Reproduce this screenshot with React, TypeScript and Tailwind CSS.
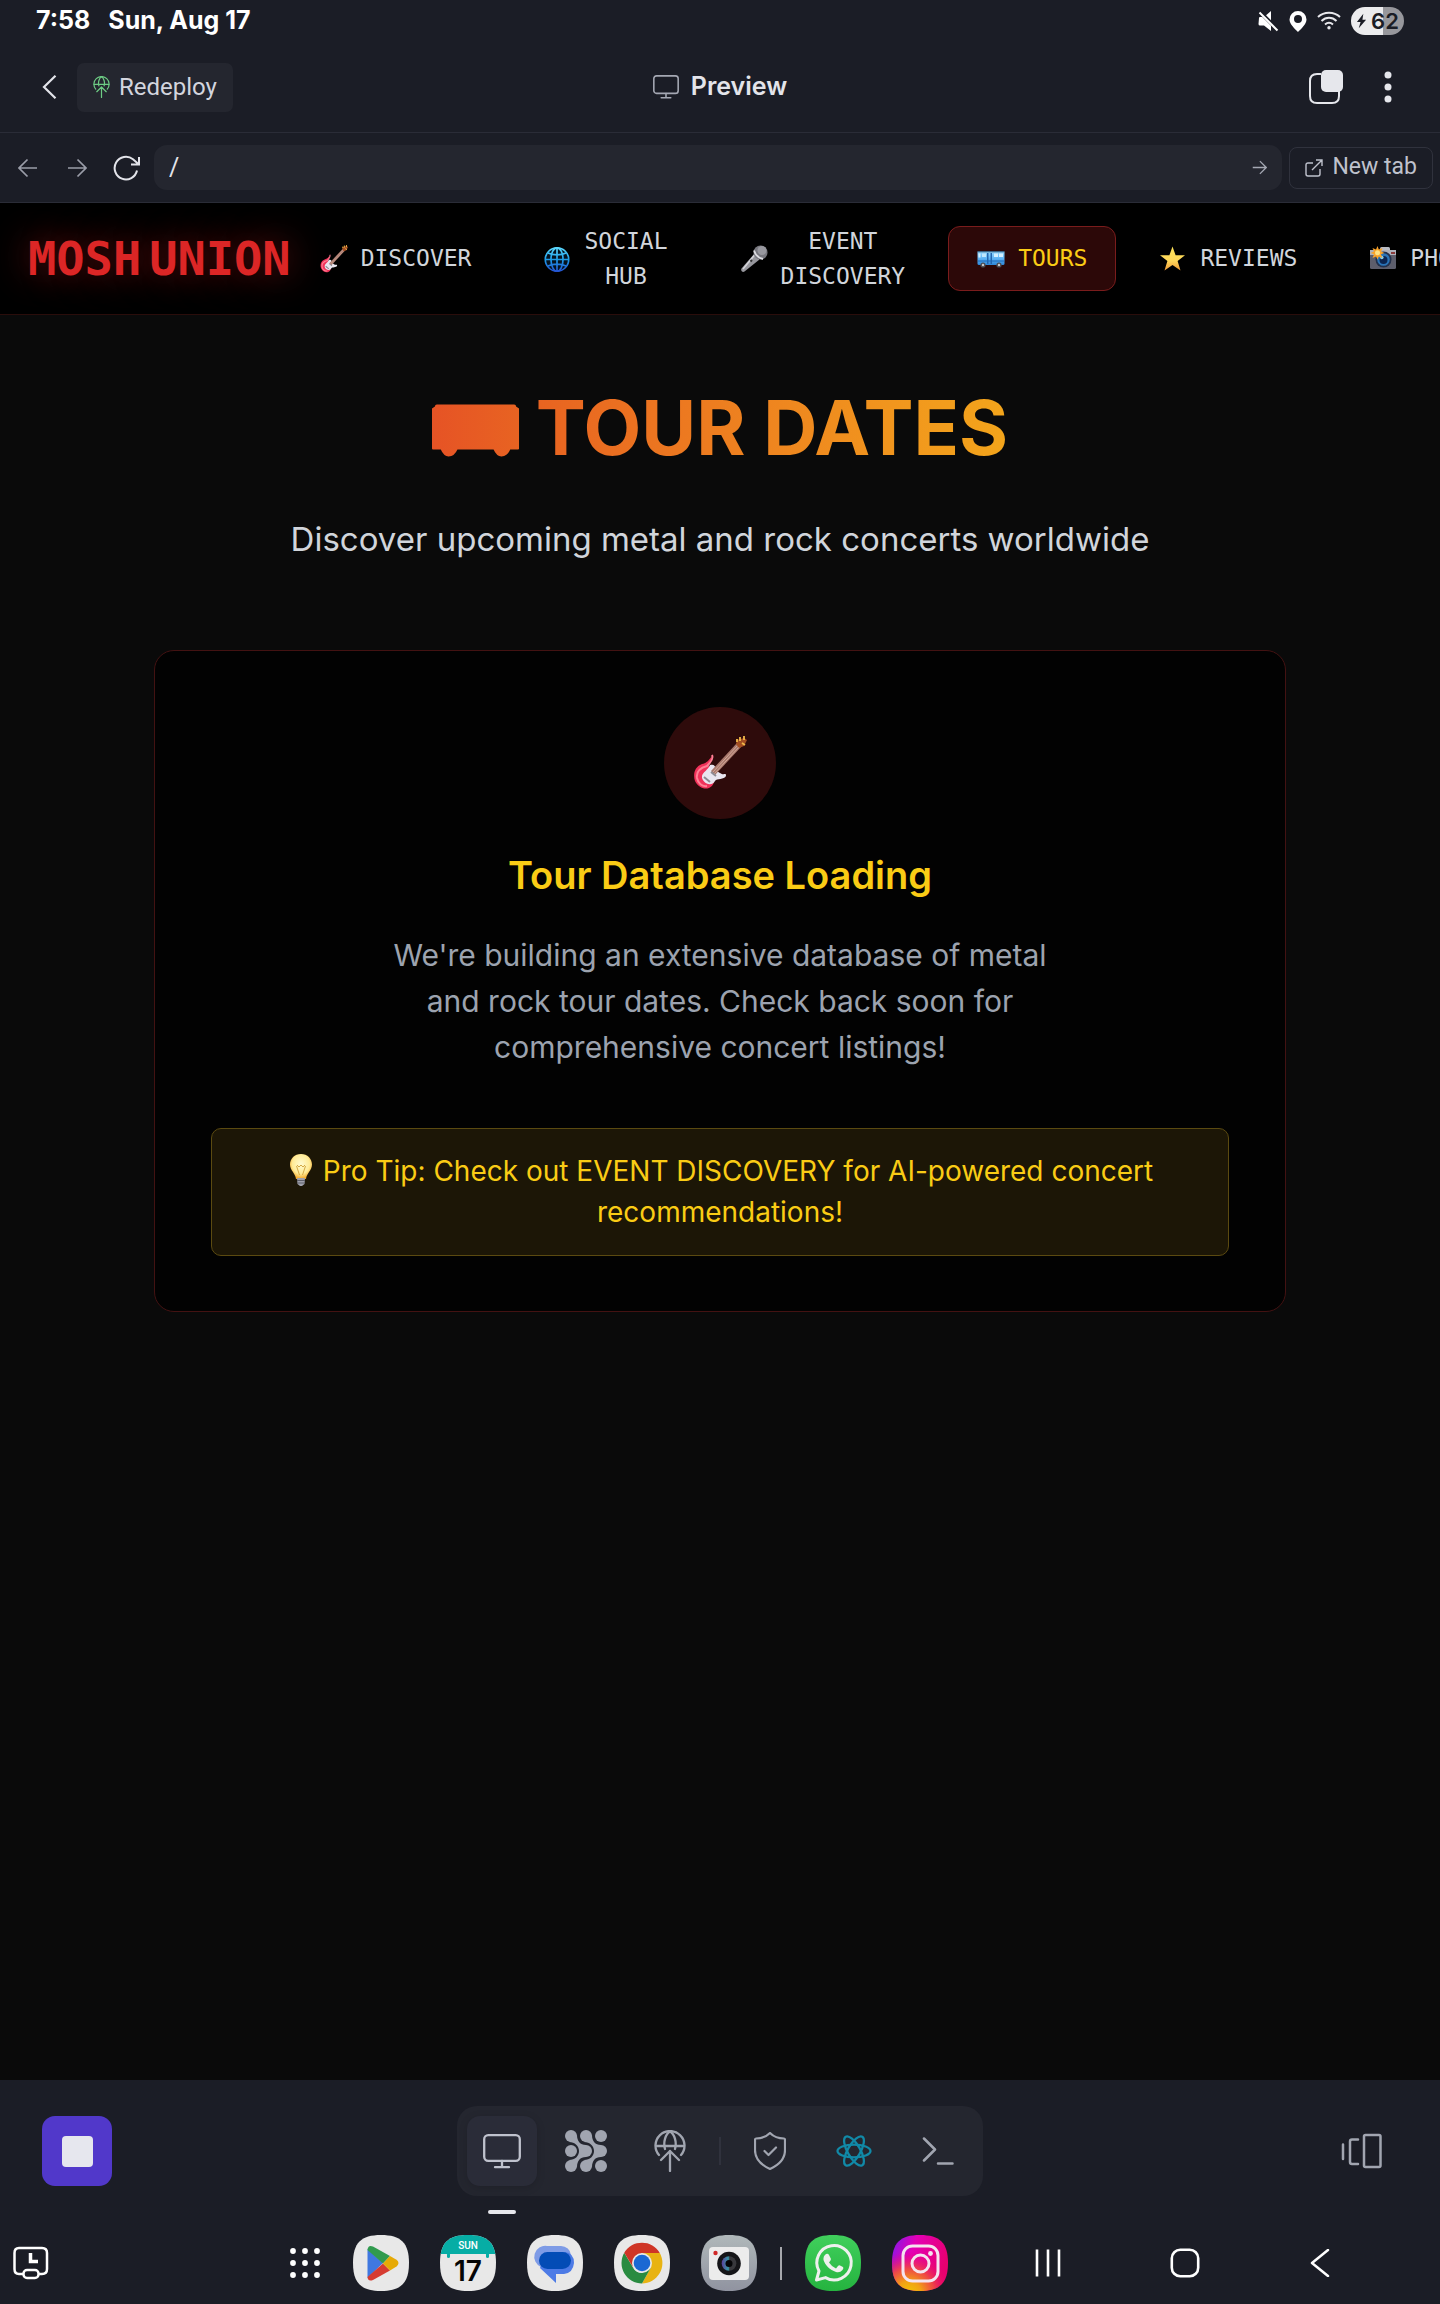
import React from "react";

type IconProps = { className?: string };

function GuitarEmoji({ className }: IconProps) {
  return (
    <svg viewBox="0 0 54 54" className={className} aria-hidden="true">
      <path d="M19 20C16 24 14 27 9 28C1 31 0 39 2 45C5 51 11 54 16 52C21 50 21 45 22 42L16 30Z" fill="#f0325a" />
      <path d="M19 19C21 23 17 27 14 30C7 32 3 36 4 42C5 47 9 51 14 50" fill="none" stroke="#ff8095" strokeWidth="2" />
      <path d="M17 29C24 27 21 34 27 37C31 40 33 36 33 40C31 44 24 42 22 45C18 52 8 46 9 40C10 36 15 34 17 29Z" fill="#e9e6f0" />
      <path d="M18 35L44 7L48 11L22 39Z" fill="#a9786c" />
      <path d="M20 36L45 9M21 38L46 11" stroke="#d8b5a6" strokeWidth=".8" />
      <path d="M43 8L44 4L51 2L54 4L51 10L46 12Z" fill="#a34e22" />
      <path d="M44 3V6M47 1V5M51 0V4M52 9L49 7" stroke="#f1b94a" strokeWidth="1.8" />
      <path d="M11 41L17 46M18 36L23 40" stroke="#8d8a92" strokeWidth="2" />
    </svg>
  );
}

function GlobeEmoji({ className }: IconProps) {
  return (
    <svg viewBox="0 0 28 28" className={className} aria-hidden="true">
      <defs>
        <linearGradient id="globe" gradientUnits="userSpaceOnUse" x1="0" y1="2" x2="0" y2="27">
          <stop offset="0" stopColor="#5fdcff" />
          <stop offset=".5" stopColor="#1c9ce8" />
          <stop offset="1" stopColor="#2450d0" />
        </linearGradient>
      </defs>
      <circle cx="14" cy="14.500" r="11.500" fill="#04121f" />
      <g fill="none" stroke="url(#globe)" strokeWidth="1.700">
        <circle cx="14" cy="14.500" r="11.700" />
        <ellipse cx="14" cy="14.500" rx="6" ry="11.700" />
        <path d="M14.010 3L14 26M2.500 14.510L25.500 14.500M5 8C10 10.500 18 10.500 23 8M5 21C10 18.500 18 18.500 23 21" />
      </g>
    </svg>
  );
}

function MicEmoji({ className }: IconProps) {
  return (
    <svg viewBox="0 0 28 28" className={className} aria-hidden="true">
      <path d="M14.500 8.500L19.500 14.500L4.500 26.500C2.500 28 .3 25.500 1.500 23.500Z" fill="#97979d" />
      <path d="M15 9.500L3 24" stroke="#d5d5da" strokeWidth="1.500" />
      <path d="M10.500 16.500L12 15" stroke="#333" strokeWidth="2" />
      <circle cx="20.500" cy="7.500" r="7" fill="#77777e" />
      <circle cx="22" cy="5.500" r="4.500" fill="#98989f" />
      <path d="M14 5.500C15.500 10 18.500 13 23 14" fill="none" stroke="#dddde2" strokeWidth="1.800" />
    </svg>
  );
}

function BusEmoji({ className }: IconProps) {
  return (
    <svg viewBox="0 0 28 28" className={className} aria-hidden="true">
      <defs>
        <linearGradient id="bus" x1="0" y1="0" x2="0" y2="1">
          <stop offset="0" stopColor="#9adcff" />
          <stop offset=".5" stopColor="#62b6f5" />
          <stop offset="1" stopColor="#2d86d8" />
        </linearGradient>
      </defs>
      <rect x=".5" y="6" width="27" height="14" rx="1.500" fill="url(#bus)" />
      <rect x=".5" y="6" width="27" height="1.300" fill="#3a6689" />
      <rect x="1.500" y="8.500" width="2" height="4" fill="#d5f0ff" />
      <rect x="5" y="8.500" width="4" height="3.500" fill="#bfe6fc" />
      <path d="M10 8h1.500v11H10zM13.500 8H15v11h-1.500z" fill="#2466ad" />
      <rect x="17" y="8.500" width="4" height="3.500" fill="#d5f0ff" />
      <rect x="22" y="8.500" width="4" height="3.500" fill="#d5f0ff" />
      <path d="M1 16H27" stroke="#1c69ba" />
      <circle cx="6" cy="20" r="2.600" fill="#4b4c52" />
      <circle cx="6" cy="20" r="1.200" fill="#c6c7cb" />
      <circle cx="22" cy="20" r="2.600" fill="#4b4c52" />
      <circle cx="22" cy="20" r="1.200" fill="#c6c7cb" />
    </svg>
  );
}

function StarEmoji({ className }: IconProps) {
  return (
    <svg viewBox="0 0 28 28" className={className} aria-hidden="true">
      <defs>
        <linearGradient id="star" x1="0" y1="0" x2="0" y2="1">
          <stop offset="0" stopColor="#ffe458" />
          <stop offset=".6" stopColor="#ffd75a" />
          <stop offset="1" stopColor="#ef9a35" />
        </linearGradient>
      </defs>
      <path d="M13.500 1.500L16.600 10.200H26L18.600 16L21.500 25.500L13.500 20L5.500 25.500L8.400 16L1 10.200H10.400Z" fill="url(#star)" />
    </svg>
  );
}

function CameraEmoji({ className }: IconProps) {
  return (
    <svg viewBox="0 0 28 28" className={className} aria-hidden="true">
      <rect x="11" y="2" width="10" height="6" rx="1.500" fill="#b9bcc4" />
      <rect x="1" y="5" width="26" height="19" rx="1.500" fill="#5d5e6c" />
      <rect x="1" y="5" width="26" height="5" fill="#aeb1bb" />
      <circle cx="14.500" cy="14.500" r="8" fill="#23304b" />
      <circle cx="14.500" cy="14.500" r="6.300" fill="#2a74b8" />
      <circle cx="14.500" cy="15" r="4" fill="#0c2550" />
      <circle cx="12.800" cy="12.500" r="1.800" fill="#82d0f1" />
      <rect x="22" y="7" width="4" height="2" fill="#8a3b3b" />
      <path d="M8.500 1L9.800 4.500L13.500 3L12 6.500L15.500 8L12 9.300L13.300 13L9.800 11.400L8.500 14.500L7 11.400L3.500 13L5 9.300L1.500 8L5 6.500L3.500 3L7 4.500Z" fill="#f9a32a" />
      <circle cx="8.500" cy="7.800" r="2.500" fill="#ffe183" />
    </svg>
  );
}

function BulbEmoji({ className }: IconProps) {
  return (
    <svg viewBox="0 0 28 34" className={className} aria-hidden="true">
      <defs>
        <radialGradient id="bulb" cx=".5" cy=".4" r=".6">
          <stop offset="0" stopColor="#fffbd0" />
          <stop offset=".65" stopColor="#ffeb96" />
          <stop offset="1" stopColor="#f2a524" />
        </radialGradient>
      </defs>
      <path d="M14 1C7.500 1 3 5.700 3 11.600C3 17.500 8.500 20.500 9 26H19C19.500 20.500 25 17.500 25 11.600C25 5.700 20.500 1 14 1Z" fill="url(#bulb)" />
      <path d="M12.500 22L9.500 13M15.500 22L18.500 13M10 12L12 14L14 12L16 14L18 12" fill="none" stroke="#d3a945" />
      <path d="M10 25H18L17.500 31L15 33H13L10.500 31Z" fill="#9fa0ab" />
      <path d="M10 27.500H18M10.500 30H17.500" stroke="#5d5e69" />
    </svg>
  );
}

function BusShape({ className }: IconProps) {
  return (
    <svg viewBox="0 0 90 54" className={className} aria-hidden="true">
      <defs>
        <linearGradient id="busShape" x1="0" y1="0" x2="1" y2="0">
          <stop offset="0" stopColor="#e65325" />
          <stop offset="1" stopColor="#e86322" />
        </linearGradient>
      </defs>
      <path d="M5 0H84Q86 0 86 2L89 4V45Q89 46 88 46H80Q77 53 71 53Q66 53 63 46H26Q23 53 17 53Q12 53 9 46H1Q0 46 0 45V4L3 2Q3 0 5 0Z" fill="url(#busShape)" />
    </svg>
  );
}

function GlobeUpload({ className }: IconProps) {
  return (
    <svg viewBox="0 0 32 42" fill="none" stroke="currentColor" strokeWidth="2.300" strokeLinecap="round" strokeLinejoin="round" className={className} aria-hidden="true">
      <path d="M5 25A14.500 14.500 0 1 1 27 25" />
      <path d="M11 19C9 12 11.500 4 16 1.500C20.500 4 23 12 21 19M2 16H30M16 41V21M7 30L16 21L25 30" />
    </svg>
  );
}

function Monitor({ className }: IconProps) {
  return (
    <svg viewBox="0 0 38 35" fill="none" stroke="currentColor" strokeWidth="2.300" strokeLinecap="round" className={className} aria-hidden="true">
      <rect x="1.200" y="1.200" width="35.600" height="25.600" rx="4" />
      <path d="M19 27V32.500M12 33.200H26" />
    </svg>
  );
}

function Mute() {
  return (
    <svg viewBox="0 0 22 22" className="h-[22px] w-[22px]" aria-hidden="true">
      <path d="M2 8Q2 7 3 7H7L14 1V21L7 15.500H3Q1.500 15.500 1.500 14Z" fill="#fff" />
      <path d="M1 0L22 21" stroke="#1b1d26" strokeWidth="4" />
      <path d="M2.500 2.500L20.500 20.500" stroke="#fff" strokeWidth="2" />
    </svg>
  );
}

function Wifi() {
  return (
    <svg viewBox="0 0 24 20" fill="none" stroke="#e8e8ec" strokeWidth="2" className="h-[20px] w-[24px]" aria-hidden="true">
      <path d="M1 6C7 .3 17 .3 23 6M4.500 10C9 5.800 15 5.800 19.500 10M8 13.500C10.500 11.300 13.500 11.300 16 13.500" />
      <circle cx="12" cy="16.800" r="1.700" fill="#e8e8ec" stroke="none" />
    </svg>
  );
}

function StatusBar() {
  return (
    <div className="flex h-[42px] items-center px-9 font-['Inter'] text-[25px] font-bold text-white">
      <span>7:58</span>
      <span className="ml-[18px]">Sun, Aug 17</span>
      <div className="ml-auto flex items-center gap-[10px]">
        <Mute />
        <svg viewBox="0 0 18 22" className="h-[22px] w-[18px]" aria-hidden="true">
          <path fillRule="evenodd" d="M9 1A8.500 8.500 0 0 0 .5 9.500C.5 14 6 19 9 22C12 19 17.500 14 17.500 9.500A8.500 8.500 0 0 0 9 1ZM9 5A4 4 0 1 1 9 13A4 4 0 1 1 9 5Z" fill="#fff" />
        </svg>
        <Wifi />
        <span className="flex h-7 w-[53px] items-center justify-center gap-1 rounded-full bg-linear-to-r from-[#ececee] from-60% to-[#97979c] to-60% text-[22px] font-semibold text-[#1b1d26]">
          <svg viewBox="0 0 12 16" className="h-4 w-[11px]" aria-hidden="true">
            <path d="M8 0L1 9H5L3 16L11 6.500H7Z" fill="#1b1d26" />
          </svg>
          62
        </span>
      </div>
    </div>
  );
}

function Header() {
  return (
    <header className="grid h-[90px] grid-cols-[1fr_auto_1fr] items-center font-['Roboto']">
      <div className="flex items-center pl-[42px]">
        <button aria-label="Back" className="w-[35px]">
          <svg viewBox="0 0 15 24" fill="none" stroke="#e3e4ea" strokeWidth="2.200" className="h-6 w-[15px]">
            <path d="M13.500 .8L2 12L13.500 23.200" />
          </svg>
        </button>
        <button className="flex h-[49px] items-center gap-[9px] rounded-[7px] bg-[#24262f] px-4 text-[24px] text-[#d3d5de]">
          <GlobeUpload className="h-[22px] w-[17px] text-[#6dcb84]" />
          Redeploy
        </button>
      </div>
      <div className="flex items-center gap-3">
        <Monitor className="h-6 w-[26px] text-[#a5a8b3]" />
        <h2 className="font-['Inter'] text-[25px] font-semibold text-[#e3e4ea]">Preview</h2>
      </div>
      <div className="flex items-center justify-end gap-[40px] pr-12">
        <button aria-label="Tabs">
          <svg viewBox="0 0 36 36" className="block h-9 w-9">
            <path d="M13 5H9Q2 5 2 12V27Q2 34 9 34H24Q31 34 31 27V22" fill="none" stroke="#e6e7ec" strokeWidth="2" />
            <rect x="13" y="1" width="22" height="22" rx="5" fill="#e6e7ec" />
          </svg>
        </button>
        <button aria-label="More">
          <svg viewBox="0 0 8 32" fill="#e6e7ec" className="block h-8 w-2">
            <circle cx="4" cy="4" r="3.500" />
            <circle cx="4" cy="16" r="3.500" />
            <circle cx="4" cy="28" r="3.500" />
          </svg>
        </button>
      </div>
    </header>
  );
}

function Arrow({ className }: IconProps) {
  return (
    <svg viewBox="0 0 20 20" fill="none" stroke="currentColor" strokeWidth="1.700" className={className} aria-hidden="true">
      <path d="M1 10H18.500M10.500 1.500L19 10L10.500 18.500" />
    </svg>
  );
}

function AddressBar() {
  return (
    <div className="flex h-[71px] items-center border-y border-[#2a2c37] pr-[7px] pl-[18px] font-['Roboto']">
      <button aria-label="Go back" className="w-[49px]">
        <Arrow className="h-5 w-5 rotate-180 text-[#9a9da8]" />
      </button>
      <button aria-label="Go forward" className="w-[46px]">
        <Arrow className="h-5 w-5 text-[#9a9da8]" />
      </button>
      <button aria-label="Reload" className="w-[41px]">
        <svg viewBox="0 0 28 26" fill="none" stroke="#e3e4ea" strokeWidth="2" className="h-[26px] w-7">
          <path d="M24 15.500A11.300 11.300 0 1 1 20 4.300L26 9.500M26 2V9.500H18" />
        </svg>
      </button>
      <div className="flex h-[45px] flex-1 items-center rounded-[13px] bg-[#24262f] px-[15px]">
        <input aria-label="Path" defaultValue="/" className="w-full min-w-0 flex-1 bg-transparent text-[25px] text-[#e3e4ea] outline-none" />
        <button aria-label="Open path">
          <Arrow className="block h-[15px] w-[15px] text-[#a5a8b3]" />
        </button>
      </div>
      <button className="ml-[7px] flex h-[42px] items-center gap-[9px] rounded-lg border border-[#30323d] px-[15px] text-[23px] whitespace-nowrap text-[#bfc2cd]">
        <svg viewBox="0 0 18 18" fill="none" stroke="currentColor" strokeWidth="1.400" className="h-[18px] w-[18px]" aria-hidden="true">
          <path d="M8 4H3Q1 4 1 6V15Q1 17 3 17H13Q15 17 15 15V10M7 11L17 1M11 1H17V7" />
        </svg>
        New tab
      </button>
    </div>
  );
}

const navItems = [
  { lines: ["DISCOVER"], Icon: GuitarEmoji },
  { lines: ["SOCIAL", "HUB"], Icon: GlobeEmoji },
  { lines: ["EVENT", "DISCOVERY"], Icon: MicEmoji },
  { lines: ["TOURS"], Icon: BusEmoji, active: true },
  { lines: ["REVIEWS"], Icon: StarEmoji },
  { lines: ["PHOTOS"], Icon: CameraEmoji },
];

function SiteNav() {
  return (
    <nav className="flex h-[112px] items-center overflow-hidden border-b border-[#2a0d0b] bg-black pl-7 font-['DejaVu_Sans_Mono']">
      <a href="#home" className="flex shrink-0 gap-2 text-[47px] leading-none font-bold whitespace-nowrap text-[#dc2626] [text-shadow:0_0_35px_rgba(220,38,38,0.5)]">
        <span>MOSH</span> <span>UNION</span>
      </a>
      <div className="flex items-center gap-[14px]">
        {navItems.map(({ lines, Icon, active }) => (
          <a
            key={lines.join(" ")}
            href="#section"
            className={
              "flex shrink-0 items-center gap-[13px] rounded-xl border px-7 py-[14px] text-center text-[23px] leading-[35px] " +
              (active ? "border-[#7a1c1c] bg-[#2c0808] text-[#facc15]" : "border-transparent text-[#d1d5db]")
            }
          >
            <Icon className="h-7 w-7" />
            <span>
              {lines.map((line) => (
                <span key={line} className="block">{line}</span>
              ))}
            </span>
          </a>
        ))}
      </div>
    </nav>
  );
}

function TourPage() {
  return (
    <main className="flex-1 bg-[#0a0a0a] px-7 pt-[64px] text-center font-['Inter']">
      <h1 className="flex items-center justify-center gap-4 text-[75px] leading-[98px] font-bold">
        <BusShape className="mt-[6px] h-[54px] w-[88px]" />
        <span className="bg-linear-to-r from-[#e86321] to-[#f3a51b] bg-clip-text text-transparent">TOUR DATES</span>
      </h1>
      <p className="mt-[37px] text-[33px] leading-[50px] text-[#d1d5db]">Discover upcoming metal and rock concerts worldwide</p>
      <section className="mx-auto mt-[86px] max-w-[1132px] rounded-[20px] border border-[#431212] bg-[#020202] px-14 pt-14 pb-[55px]">
        <div className="mx-auto flex h-28 w-28 items-center justify-center rounded-full bg-[#2e0b0b]">
          <GuitarEmoji className="h-[54px] w-[54px]" />
        </div>
        <h2 className="mt-8 text-[38px] leading-[48px] font-semibold text-[#facc15]">Tour Database Loading</h2>
        <p className="mx-auto mt-[33px] max-w-[704px] text-[30px] leading-[46px] text-[#9ca3af]">
          We're building an extensive database of metal and rock tour dates. Check back soon for comprehensive concert listings!
        </p>
        <div className="mt-[58px] rounded-[10px] border border-[#5b4a10] bg-[#1c1606] px-14 py-[22px] text-[28px] leading-[41px] text-[#facc15]">
          <BulbEmoji className="mr-2 inline-block h-[34px] w-7 align-[-6px]" />
          Pro Tip: Check out EVENT DISCOVERY for AI-powered concert recommendations!
        </div>
      </section>
    </main>
  );
}

function AgentDots() {
  return (
    <svg viewBox="0 0 42 42" className="h-[42px] w-[42px]" aria-hidden="true">
      <g fill="#a1a5b0">
        {[6, 21, 36].map((cx) => [6, 21, 36].map((cy) => <circle key={cx + "-" + cy} cx={cx} cy={cy} r="6" />))}
        <path d="M12 5C12 11 15 15 21 15V27C15 27 12 31 12 37L4 30C10 30 14 26 14 21C14 16 10 12 4 12Z" />
        <path d="M27 5C27 11 30 15 36 15V27C30 27 27 31 27 37L19 30C25 30 29 26 29 21C29 16 25 12 19 12Z" />
      </g>
    </svg>
  );
}

function Toolbar() {
  return (
    <div className="grid h-[142px] grid-cols-[1fr_auto_1fr] items-center px-[42px]">
      <button aria-label="Stop" className="flex h-[70px] w-[70px] items-center justify-center rounded-[13px] bg-[#5138ca]">
        <span className="h-[31px] w-[31px] rounded-[4px] bg-[#e6e7ee]" />
      </button>
      <div className="flex items-center gap-[14px] rounded-[20px] bg-[#24262f] p-[10px] text-[#a1a5b0]">
        <button aria-label="Preview" className="relative flex h-[70px] w-[70px] items-center justify-center rounded-[13px] bg-[#2a2c38] text-[#bfc2cd] shadow-[0_2px_8px_rgba(0,0,0,0.15)]">
          <Monitor className="h-[35px] w-[38px]" />
          <span className="absolute -bottom-7 left-[21px] h-1 w-7 rounded-[2px] bg-[#e6e7ec]" />
        </button>
        <button aria-label="Agent" className="flex h-[70px] w-[70px] items-center justify-center">
          <AgentDots />
        </button>
        <button aria-label="Publish" className="flex h-[70px] w-[70px] items-center justify-center">
          <GlobeUpload className="h-[42px] w-8" />
        </button>
        <span className="h-7 w-[2px] bg-[#30323d]" />
        <button aria-label="Security" className="flex h-[70px] w-[70px] items-center justify-center">
          <svg viewBox="0 0 32 38" fill="none" stroke="currentColor" strokeWidth="2.200" strokeLinecap="round" strokeLinejoin="round" className="h-[38px] w-8">
            <path d="M16 1C12 5 6 6.500 2 6.500Q1 6.500 1 8V18C1 27 7 33 16 37C25 33 31 27 31 18V8Q31 6.500 30 6.500C26 6.500 20 5 16 1ZM10.500 19L14.500 23L22 15.500" />
          </svg>
        </button>
        <button aria-label="React" className="flex h-[70px] w-[70px] items-center justify-center">
          <svg viewBox="-18 -18 36 36" fill="none" stroke="#1189a7" strokeWidth="2.300" className="h-9 w-9">
            <ellipse rx="16.500" ry="6.300" />
            <ellipse rx="16.500" ry="6.300" transform="rotate(60)" />
            <ellipse rx="16.500" ry="6.300" transform="rotate(120)" />
          </svg>
        </button>
        <button aria-label="Shell" className="flex h-[70px] w-[70px] items-center justify-center">
          <svg viewBox="0 0 32 28" fill="none" stroke="currentColor" strokeWidth="2.500" strokeLinecap="round" strokeLinejoin="round" className="h-7 w-8">
            <path d="M2 1.500L13 12.500L2 23.500M16 26.500H30.500" />
          </svg>
        </button>
      </div>
      <button aria-label="Switch panes" className="mr-4 justify-self-end">
        <svg viewBox="0 0 42 36" fill="none" stroke="#a1a5b0" strokeWidth="2.500" strokeLinecap="round" className="block h-9 w-[42px]">
          <path d="M3 11.500V26M18 6.500H12Q10 6.500 10 8.500V29Q10 31 12 31H18" />
          <rect x="24" y="2" width="16.500" height="32" rx="1.500" />
        </svg>
      </button>
    </div>
  );
}

const squircle = "M28 0C48 0 56 8 56 28C56 48 48 56 28 56C8 56 0 48 0 28C0 8 8 0 28 0Z";

function PlayStore() {
  return (
    <svg viewBox="0 0 56 56" className="block h-14 w-14">
      <path d={squircle} fill="#e8e8e8" />
      <path d="M14.500 14L30 28L14.500 43Z" fill="#4078e0" />
      <path d="M14.500 15Q15 9.500 20 11.500L37 21L30 28.500Z" fill="#319b4e" />
      <path d="M14.500 42Q15 47 20 45L37 35.500L30 28.500Z" fill="#d63c32" />
      <path d="M37 21L43.500 24.800Q47.500 28 43.500 31.500L37 35.500L30 28.500Z" fill="#e6aa07" />
    </svg>
  );
}

function Calendar() {
  return (
    <svg viewBox="0 0 56 56" className="block h-14 w-14">
      <defs>
        <clipPath id="calClip"><path d={squircle} /></clipPath>
      </defs>
      <path d={squircle} fill="#e8e8e8" />
      <g clipPath="url(#calClip)" fill="#06ada5">
        <rect width="56" height="19" />
        <rect x="7" y="18" width="3" height="5" rx="1.500" />
        <rect x="46" y="18" width="3" height="5" rx="1.500" />
      </g>
      <text x="28" y="14" textAnchor="middle" fill="#fff" className="font-['Roboto'] text-[10px] font-medium">SUN</text>
      <text x="28" y="46" textAnchor="middle" fill="#050505" className="font-['Inter'] text-[28px] font-semibold">17</text>
    </svg>
  );
}

function Messages() {
  return (
    <svg viewBox="0 0 56 56" className="block h-14 w-14">
      <path d={squircle} fill="#e8e8e8" />
      <path d="M20 11H34A10 10 0 0 1 44 20L14 32A11 11 0 0 1 20 11Z" fill="#7e9be6" />
      <path d="M20 17H38Q47 18 47 28Q46 38 37 39H29V48L13 33Z" fill="#4d7be6" />
      <rect x="12" y="17" width="32" height="17" rx="8.500" fill="#034cb6" />
    </svg>
  );
}

function Chrome() {
  return (
    <svg viewBox="0 0 56 56" className="block h-14 w-14">
      <path d={squircle} fill="#e8e8e8" />
      <path d="M28 18H45.800A20.500 20.500 0 0 1 28 48.500L36.700 33Z" fill="#e8b312" />
      <path d="M10.250 17.750L19.300 33Q22 38 28 38L36.700 33L28 48.500A20.500 20.500 0 0 1 10.250 17.750Z" fill="#298b40" />
      <path d="M10.250 17.750L19.500 33L28 18H45.750A20.500 20.500 0 0 0 10.250 17.750Z" fill="#cf3526" />
      <circle cx="28" cy="28" r="10" fill="#e8e8e8" />
      <circle cx="28" cy="28" r="8.300" fill="#1a68d3" />
    </svg>
  );
}

function CameraApp() {
  return (
    <svg viewBox="0 0 56 56" className="block h-14 w-14">
      <defs>
        <linearGradient id="camBg" x1="0" y1="0" x2="0" y2="1">
          <stop offset="0" stopColor="#b0b8ba" />
          <stop offset="1" stopColor="#9093a0" />
        </linearGradient>
        <linearGradient id="lens" x1="0" y1="0" x2="1" y2="0">
          <stop offset="0" stopColor="#5b3f9d" />
          <stop offset=".45" stopColor="#3698a6" />
          <stop offset=".55" stopColor="#38383c" />
        </linearGradient>
      </defs>
      <path d={squircle} fill="url(#camBg)" />
      <rect x="8" y="12" width="40" height="33" rx="4" fill="#ececec" />
      <circle cx="28" cy="28.500" r="11.800" fill="#151518" />
      <circle cx="28" cy="28.500" r="7.300" fill="url(#lens)" />
      <circle cx="28" cy="28.500" r="3.500" fill="#050507" />
      <circle cx="14.500" cy="18" r="2.200" fill="#d02828" />
    </svg>
  );
}

function WhatsApp() {
  return (
    <svg viewBox="0 0 56 56" className="block h-14 w-14">
      <defs>
        <linearGradient id="wa" x1="0" y1="0" x2="0" y2="1">
          <stop offset="0" stopColor="#40cf5c" />
          <stop offset="1" stopColor="#25b33f" />
        </linearGradient>
      </defs>
      <path d={squircle} fill="url(#wa)" />
      <path d="M11.500 45L14 36A17.200 17.200 0 1 1 20.500 42.600Z" fill="none" stroke="#eef0ee" strokeWidth="3" strokeLinejoin="round" />
      <path d="M21 19Q23 18 24 20L26 24Q26 25 24 27.500Q27 32 31 33.500L33 31Q34 30 35 30.500L38 32Q39 33 37.500 35Q35 38 31 37C25 35 20 30 18.500 25Q18 21 21 19Z" fill="#eef0ee" />
    </svg>
  );
}

function Instagram() {
  return (
    <svg viewBox="0 0 56 56" className="block h-14 w-14">
      <defs>
        <linearGradient id="igA" x1="0" y1="0" x2="1" y2=".4">
          <stop offset="0" stopColor="#7a1cf0" />
          <stop offset=".4" stopColor="#e400b5" />
          <stop offset="1" stopColor="#e8006f" />
        </linearGradient>
        <radialGradient id="igB" cx=".3" cy="1.050" r=".75">
          <stop offset="0" stopColor="#efc900" />
          <stop offset=".3" stopColor="#f2a015" />
          <stop offset=".6" stopColor="#f0503c" stopOpacity=".9" />
          <stop offset="1" stopColor="#e8006f" stopOpacity="0" />
        </radialGradient>
      </defs>
      <path d={squircle} fill="url(#igA)" />
      <path d={squircle} fill="url(#igB)" />
      <g fill="none" stroke="#f5e4ef" strokeWidth="3">
        <rect x="11" y="11" width="35" height="35" rx="9.500" />
        <circle cx="28.500" cy="28.500" r="8.500" />
      </g>
      <circle cx="38.500" cy="18.500" r="2.400" fill="#f5e4ef" />
    </svg>
  );
}

const mainApps = [
  { name: "Play Store", Icon: PlayStore },
  { name: "Calendar", Icon: Calendar },
  { name: "Messages", Icon: Messages },
  { name: "Chrome", Icon: Chrome },
  { name: "Camera", Icon: CameraApp },
];

const recentApps = [
  { name: "WhatsApp", Icon: WhatsApp },
  { name: "Instagram", Icon: Instagram },
];

function SystemBar() {
  return (
    <div className="flex h-[82px] items-center pl-[13px]">
      <button aria-label="Screen time">
        <svg viewBox="0 0 36 34" fill="none" stroke="#fff" strokeWidth="2.500" className="block h-[34px] w-9">
          <path d="M10 28H6Q1.500 28 1.500 23V7Q1.500 2 6 2H29Q34 2 34 7V23Q34 28 29 28H25" />
          <rect x="10.500" y="24" width="15" height="8" rx="3.500" />
          <path d="M17.500 7V15.500H25" strokeWidth="3.500" />
        </svg>
      </button>
      <div className="ml-[16.9%] flex items-center gap-[31px]">
        <button aria-label="All apps" className="mr-[2px]">
          <svg viewBox="0 0 30 30" fill="#fff" className="block h-[30px] w-[30px]">
            {[3, 15, 27].map((cx) => [3, 15, 27].map((cy) => <circle key={cx + "-" + cy} cx={cx} cy={cy} r="2.900" />))}
          </svg>
        </button>
        {mainApps.map(({ name, Icon }) => (
          <button key={name} aria-label={name}><Icon /></button>
        ))}
      </div>
      <span className="mx-[23px] h-[33px] w-[2px] bg-[#a7a8ad]" />
      <div className="flex items-center gap-[31px]">
        {recentApps.map(({ name, Icon }) => (
          <button key={name} aria-label={name}><Icon /></button>
        ))}
      </div>
      <div className="mr-[7.3%] ml-auto flex items-center gap-[108px]">
        <button aria-label="Recents">
          <svg viewBox="0 0 28 28" stroke="#fff" strokeWidth="2.600" className="block h-7 w-7">
            <path d="M3 .5V27.500M14 .5V27.500M25 .5V27.500" />
          </svg>
        </button>
        <button aria-label="Home">
          <svg viewBox="0 0 30 30" fill="none" stroke="#fff" strokeWidth="2.600" className="block h-[30px] w-[30px]">
            <rect x="1.800" y="1.800" width="26.400" height="26.400" rx="8.500" />
          </svg>
        </button>
        <button aria-label="Back">
          <svg viewBox="0 0 28 28" fill="none" stroke="#fff" strokeWidth="2.500" strokeLinecap="round" strokeLinejoin="round" className="block h-7 w-7">
            <path d="M20 1L4 14L20 27" />
          </svg>
        </button>
      </div>
    </div>
  );
}

export default function App() {
  return (
    <div className="flex min-h-screen flex-col overflow-hidden bg-[#1b1d26]">
      <StatusBar />
      <Header />
      <AddressBar />
      <SiteNav />
      <TourPage />
      <footer>
        <Toolbar />
        <SystemBar />
      </footer>
    </div>
  );
}
